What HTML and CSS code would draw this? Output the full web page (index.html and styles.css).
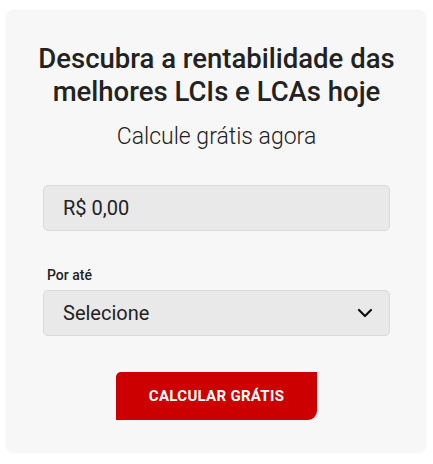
FILE: index.html
```html
<!DOCTYPE html>
<html lang="pt-BR">
  <head>
    <meta charset="UTF-8" />
    <meta name="viewport" content="width=device-width, initial-scale=1.0" />
    <title>Calculadora LCI e LCA</title>
    <link rel="stylesheet" href="styles.css">
  </head>
  <body>
    <div class="card">
      <h1 class="title">Descubra a rentabilidade das melhores LCIs e LCAs hoje</h1>
      <p class="subtitle">Calcule grátis agora</p>
      <form class="calc-form">
        <input type="text" class="field" value="R$ 0,00" />
        <label for="prazo" class="label">Por até</label>
        <div class="select-wrap">
          <select id="prazo" class="field select">
            <option>Selecione</option>
          </select>
          <svg class="chevron" width="16" height="10" viewBox="0 0 16 10">
            <path d="M2 2 L8 8 L14 2" fill="none" stroke="#111" stroke-width="2.2" stroke-linecap="round" stroke-linejoin="round" />
          </svg>
        </div>
        <button type="button" class="submit">CALCULAR GRÁTIS</button>
      </form>
    </div>
  </body>
</html>
```
FILE: styles.css
```css
body {
  margin: 0;
  padding: 10px 7px 11px 6px;
  background-color: #ffffff;
  font-family: Roboto, "Noto Sans", Arial, sans-serif;
  color: #222222;
}
.card {
  background-color: #f7f7f7;
  border-radius: 8px;
  box-shadow: 0 0 2px rgba(0, 0, 0, 0.06);
  padding: 32px 36px 33px 37px;
}
.title {
  margin: 0 -10px;
  font-size: 27.5px;
  font-weight: 500;
  line-height: 33px;
  text-align: center;
  color: #222222;
}
.subtitle {
  margin: 15px 0 0;
  font-size: 23px;
  font-weight: 300;
  line-height: 28px;
  text-align: center;
  color: #222222;
}
.calc-form {
  display: flex;
  flex-direction: column;
  margin-top: 34px;
}
.field {
  box-sizing: border-box;
  width: 100%;
  height: 46px;
  padding: 0 19px;
  background-color: #e9e9e9;
  border: 1px solid #dadada;
  border-radius: 5px;
  font-family: Roboto, "Noto Sans", Arial, sans-serif;
  font-size: 20px;
  color: #222222;
  outline: none;
}
.label {
  margin-top: 35px;
  margin-left: 4px;
  font-size: 14px;
  font-weight: 500;
  line-height: 18px;
  color: #222222;
}
.select-wrap {
  position: relative;
  margin-top: 6px;
}
.select {
  appearance: none;
  -webkit-appearance: none;
}
.chevron {
  position: absolute;
  right: 17px;
  top: 18px;
  pointer-events: none;
}
.submit {
  align-self: center;
  margin-top: 36px;
  width: 201px;
  height: 48px;
  border: none;
  border-radius: 5px 0 9px 0;
  background-color: #cc0000;
  color: #ffffff;
  font-family: Roboto, "Noto Sans", Arial, sans-serif;
  font-size: 15px;
  font-weight: 700;
  letter-spacing: 0.3px;
  cursor: pointer;
}
```
